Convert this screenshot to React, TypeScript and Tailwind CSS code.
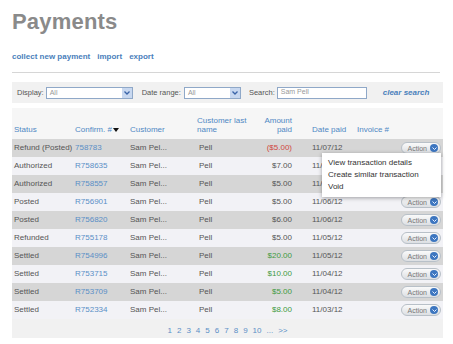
import React from 'react';

interface Payment {
  status: string;
  confirm: string;
  amount: string;
  tone: 'red' | 'gray' | 'green';
  date: string;
}

const payments: Payment[] = [
  { status: 'Refund (Posted)', confirm: '758783', amount: '($5.00)', tone: 'red', date: '11/07/12' },
  { status: 'Authorized', confirm: 'R758635', amount: '$7.00', tone: 'gray', date: '11/07/12' },
  { status: 'Authorized', confirm: 'R758557', amount: '$5.00', tone: 'gray', date: '11/07/12' },
  { status: 'Posted', confirm: 'R756901', amount: '$5.00', tone: 'gray', date: '11/06/12' },
  { status: 'Posted', confirm: 'R756820', amount: '$6.00', tone: 'gray', date: '11/06/12' },
  { status: 'Refunded', confirm: 'R755178', amount: '$5.00', tone: 'gray', date: '11/05/12' },
  { status: 'Settled', confirm: 'R754996', amount: '$20.00', tone: 'green', date: '11/05/12' },
  { status: 'Settled', confirm: 'R753715', amount: '$10.00', tone: 'green', date: '11/04/12' },
  { status: 'Settled', confirm: 'R753709', amount: '$5.00', tone: 'green', date: '11/04/12' },
  { status: 'Settled', confirm: 'R752334', amount: '$8.00', tone: 'green', date: '11/03/12' },
];

const toneClass = {
  red: 'text-[#d0493f]',
  gray: 'text-[#555]',
  green: 'text-[#3f9a3f]',
};

const SelectBox: React.FC<{ width: string }> = ({ width }) => (
  <div className={`flex h-[12px] shrink-0 items-center justify-between border border-[#8fa8c8] bg-white ${width}`}>
    <span className="pl-[3px] text-[7px] leading-none text-[#999]">All</span>
    <span className="flex h-[10px] w-[10px] items-center justify-center bg-[#c8d8f0]">
      <svg width="6" height="4" viewBox="0 0 6 4">
        <path d="M0.5 0.5 L3 3 L5.5 0.5" fill="none" stroke="#3a64a8" strokeWidth="1.3" />
      </svg>
    </span>
  </div>
);

const ActionButton: React.FC = () => (
  <div className="flex h-[12px] w-[40px] items-center justify-end gap-[3px] rounded-full border border-[#b8c0c8] bg-gradient-to-b from-[#fafafa] to-[#dcdfe3] pr-[2px]">
    <span className="text-[7px] leading-none text-[#777]">Action</span>
    <span className="flex h-[8px] w-[8px] items-center justify-center rounded-full bg-[#3d76c0]">
      <svg width="5" height="3" viewBox="0 0 5 3">
        <path d="M0.5 0.5 L2.5 2.5 L4.5 0.5" fill="none" stroke="#e8f0ff" strokeWidth="1" />
      </svg>
    </span>
  </div>
);

export default function App() {
  return (
    <div className="h-[344px] w-[453px] overflow-hidden bg-white font-['Liberation_Sans',Arial,sans-serif] text-[8px] text-[#555]">
      <div className="pl-[12px] pr-[10px] pt-[8px]">
        <h1 className="text-[22px] font-bold leading-[28px] tracking-[0.2px] text-[#8a8a8a]">Payments</h1>

        <div className="mt-[15px] flex gap-[7px] text-[8px] font-bold text-[#4a80bb]">
          <span>collect new payment</span>
          <span>import</span>
          <span>export</span>
        </div>

        <div className="mt-[9px] mr-[3px] h-px bg-[#d6d6d6]" />

        <div className="mt-[9px] flex h-[21px] items-center whitespace-nowrap bg-[#f1f1f1] pl-[5px] text-[7.5px] text-[#555]">
          <span className="mr-[2px]">Display:</span>
          <SelectBox width="w-[87px]" />
          <span className="ml-[9px] mr-[3px]">Date range:</span>
          <SelectBox width="w-[57px]" />
          <span className="ml-[8px] mr-[2px]">Search:</span>
          <div className="flex h-[12px] w-[90px] shrink-0 items-center border border-[#8fa8c8] bg-white pl-[3px] text-[7px] text-[#999]">
            Sam Pell
          </div>
          <span className="ml-[16px] text-[8px] font-bold italic text-[#4a80bb]">clear search</span>
        </div>

        <div className="relative mt-[5px]">
          <table className="w-full table-fixed border-collapse">
            <colgroup>
              <col className="w-[63px]" />
              <col className="w-[55px]" />
              <col className="w-[67px]" />
              <col className="w-[60px]" />
              <col className="w-[39px]" />
              <col className="w-[61px]" />
              <col />
            </colgroup>
            <thead>
              <tr className="h-[31px] bg-[#f6f6f6] align-bottom text-[8px] leading-[9px] text-[#4f88c4]">
                <th className="pb-[5px] pl-[2px] text-left font-normal">Status</th>
                <th className="pb-[5px] text-left font-normal">
                  <span className="inline-flex items-center gap-[1px]">
                    Confirm. #
                    <svg width="6" height="4" viewBox="0 0 6 4">
                      <path d="M0 0 L6 0 L3 4 Z" fill="#111" />
                    </svg>
                  </span>
                </th>
                <th className="pb-[5px] text-left font-normal">Customer</th>
                <th className="pb-[5px] text-left font-normal">
                  Customer last
                  <br />
                  name
                </th>
                <th className="pb-[5px] pr-[4px] text-right font-normal">
                  Amount
                  <br />
                  paid
                </th>
                <th className="pb-[5px] pl-[16px] text-left font-normal">Date paid</th>
                <th className="pb-[5px] text-left font-normal">Invoice #</th>
              </tr>
            </thead>
            <tbody>
              {payments.map((p, i) => (
                <tr key={p.confirm} className={`h-[18px] ${i % 2 === 0 ? 'bg-[#d6d6d6]' : 'bg-[#f2f2f6]'}`}>
                  <td className="pl-[2px] whitespace-nowrap">{p.status}</td>
                  <td className="text-[#5a8fc6]">{p.confirm}</td>
                  <td>Sam Pel...</td>
                  <td className="pl-[2px]">Pell</td>
                  <td className={`pr-[4px] text-right ${toneClass[p.tone]}`}>{p.amount}</td>
                  <td className="pl-[16px]">{p.date}</td>
                  <td>
                    <div className="flex justify-end pr-[2px]">
                      <ActionButton />
                    </div>
                  </td>
                </tr>
              ))}
            </tbody>
          </table>

          <div className="flex h-[19px] items-center justify-center gap-[5px] bg-[#f1f1f1] pt-[4px] text-[8px] text-[#5a8fc6]">
            {['1', '2', '3', '4', '5', '6', '7', '8', '9', '10', '...', '>>'].map((n) => (
              <span key={n}>{n}</span>
            ))}
          </div>

          <div className="absolute left-[310px] top-[45px] w-[119px] bg-white py-[4px] pl-[6px] text-[8px] leading-[12px] text-[#333] shadow-[0_1px_4px_rgba(0,0,0,0.35)]">
            <div>View transaction details</div>
            <div>Create similar transaction</div>
            <div>Void</div>
          </div>
        </div>
      </div>
    </div>
  );
}
